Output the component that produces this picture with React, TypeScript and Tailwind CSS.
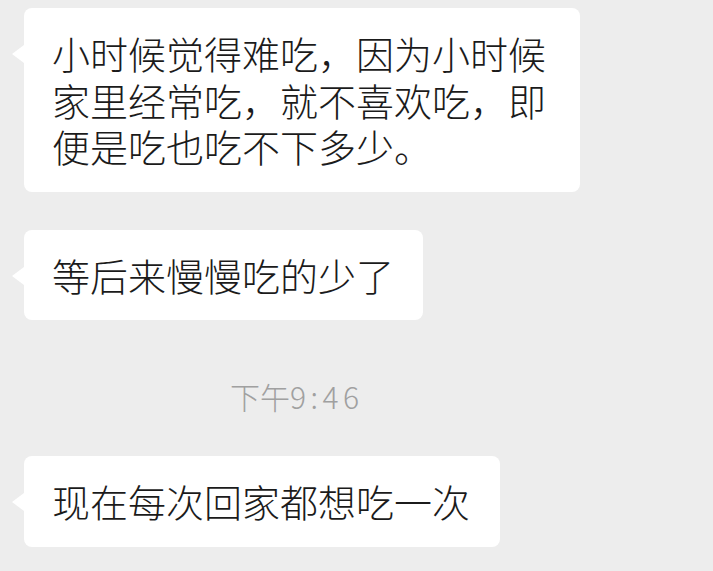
import React from "react";

const font = { fontFamily: '"Noto Sans CJK SC", "Noto Sans", sans-serif' };

function Bubble({ children, className }: { children: React.ReactNode; className?: string }) {
  return (
    <div className={`relative bg-white rounded-[8px] px-[28px] py-[22px] text-[38px] leading-[46.5px] font-light text-[#1b1b1b] ${className ?? ""}`}>
      <div className="absolute left-[-12px] top-[37px] w-0 h-0 border-y-[9px] border-y-transparent border-r-[12px] border-r-white" />
      {children}
    </div>
  );
}

export default function App() {
  return (
    <div className="w-[713px] h-[571px] bg-[#ededed] overflow-hidden" style={font}>
      <div className="flex flex-col items-start pl-[24px] pt-[8px]">
        <Bubble className="w-[556px]">
          小时候觉得难吃，因为小时候家里经常吃，就不喜欢吃，即便是吃也吃不下多少。
        </Bubble>
        <Bubble className="mt-[38px] w-[399px]">等后来慢慢吃的少了</Bubble>
        <div className="mt-[61px] ml-[206px] text-[30px] leading-[30px] font-light text-[#a0a0a0]">
          下午<span className="tracking-[4.5px]">9:46</span>
        </div>
        <Bubble className="mt-[45px] w-[476px]">现在每次回家都想吃一次</Bubble>
      </div>
    </div>
  );
}
